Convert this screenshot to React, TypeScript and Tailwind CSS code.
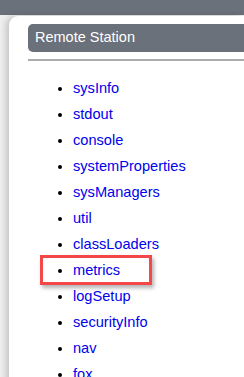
import React from 'react';

const items = [
    'sysInfo',
    'stdout',
    'console',
    'systemProperties',
    'sysManagers',
    'util',
    'classLoaders',
    'metrics',
    'logSetup',
    'securityInfo',
    'nav',
    'fox',
];

export default function App() {
    return (
        <div className="w-[244px] h-[377px] overflow-hidden bg-[#eeeeee] font-['Liberation_Sans',Arial,sans-serif]">
            <div className="h-[15px] bg-[#6b717a]" />

            <div className="flex pl-[9px] pt-[1px] h-full">
                <div className="flex-1 bg-white rounded-tl-[9px] shadow-[-3px_0_6px_rgba(0,0,0,0.18)] pl-[19px] pt-[8px]">
                    {/* Section header */}
                    <div className="h-[28px] bg-[#6b717a] rounded-l-[5px] text-white text-[14.5px] pl-[7px] flex items-center">
                        Remote Station
                    </div>
                    <div className="mt-[7px] h-[2px] bg-[#acacac]" />

                    <ul className="mt-[14px] list-disc pl-[45px] text-[14.6px] leading-[26px]">
                        {items.map((item) => (
                            <li key={item} className="relative h-[26px] text-black marker:text-black">
                                <a href="#" className="text-[#0000ee]">{item}</a>
                                {item === 'metrics' && (
                                    <div className="absolute left-[-33px] top-[-2px] w-[112px] h-[30px] border-[3px] border-[#f44848] shadow-[2px_3px_4px_rgba(0,0,0,0.3)] pointer-events-none" />
                                )}
                            </li>
                        ))}
                    </ul>
                </div>
            </div>
        </div>
    );
}
